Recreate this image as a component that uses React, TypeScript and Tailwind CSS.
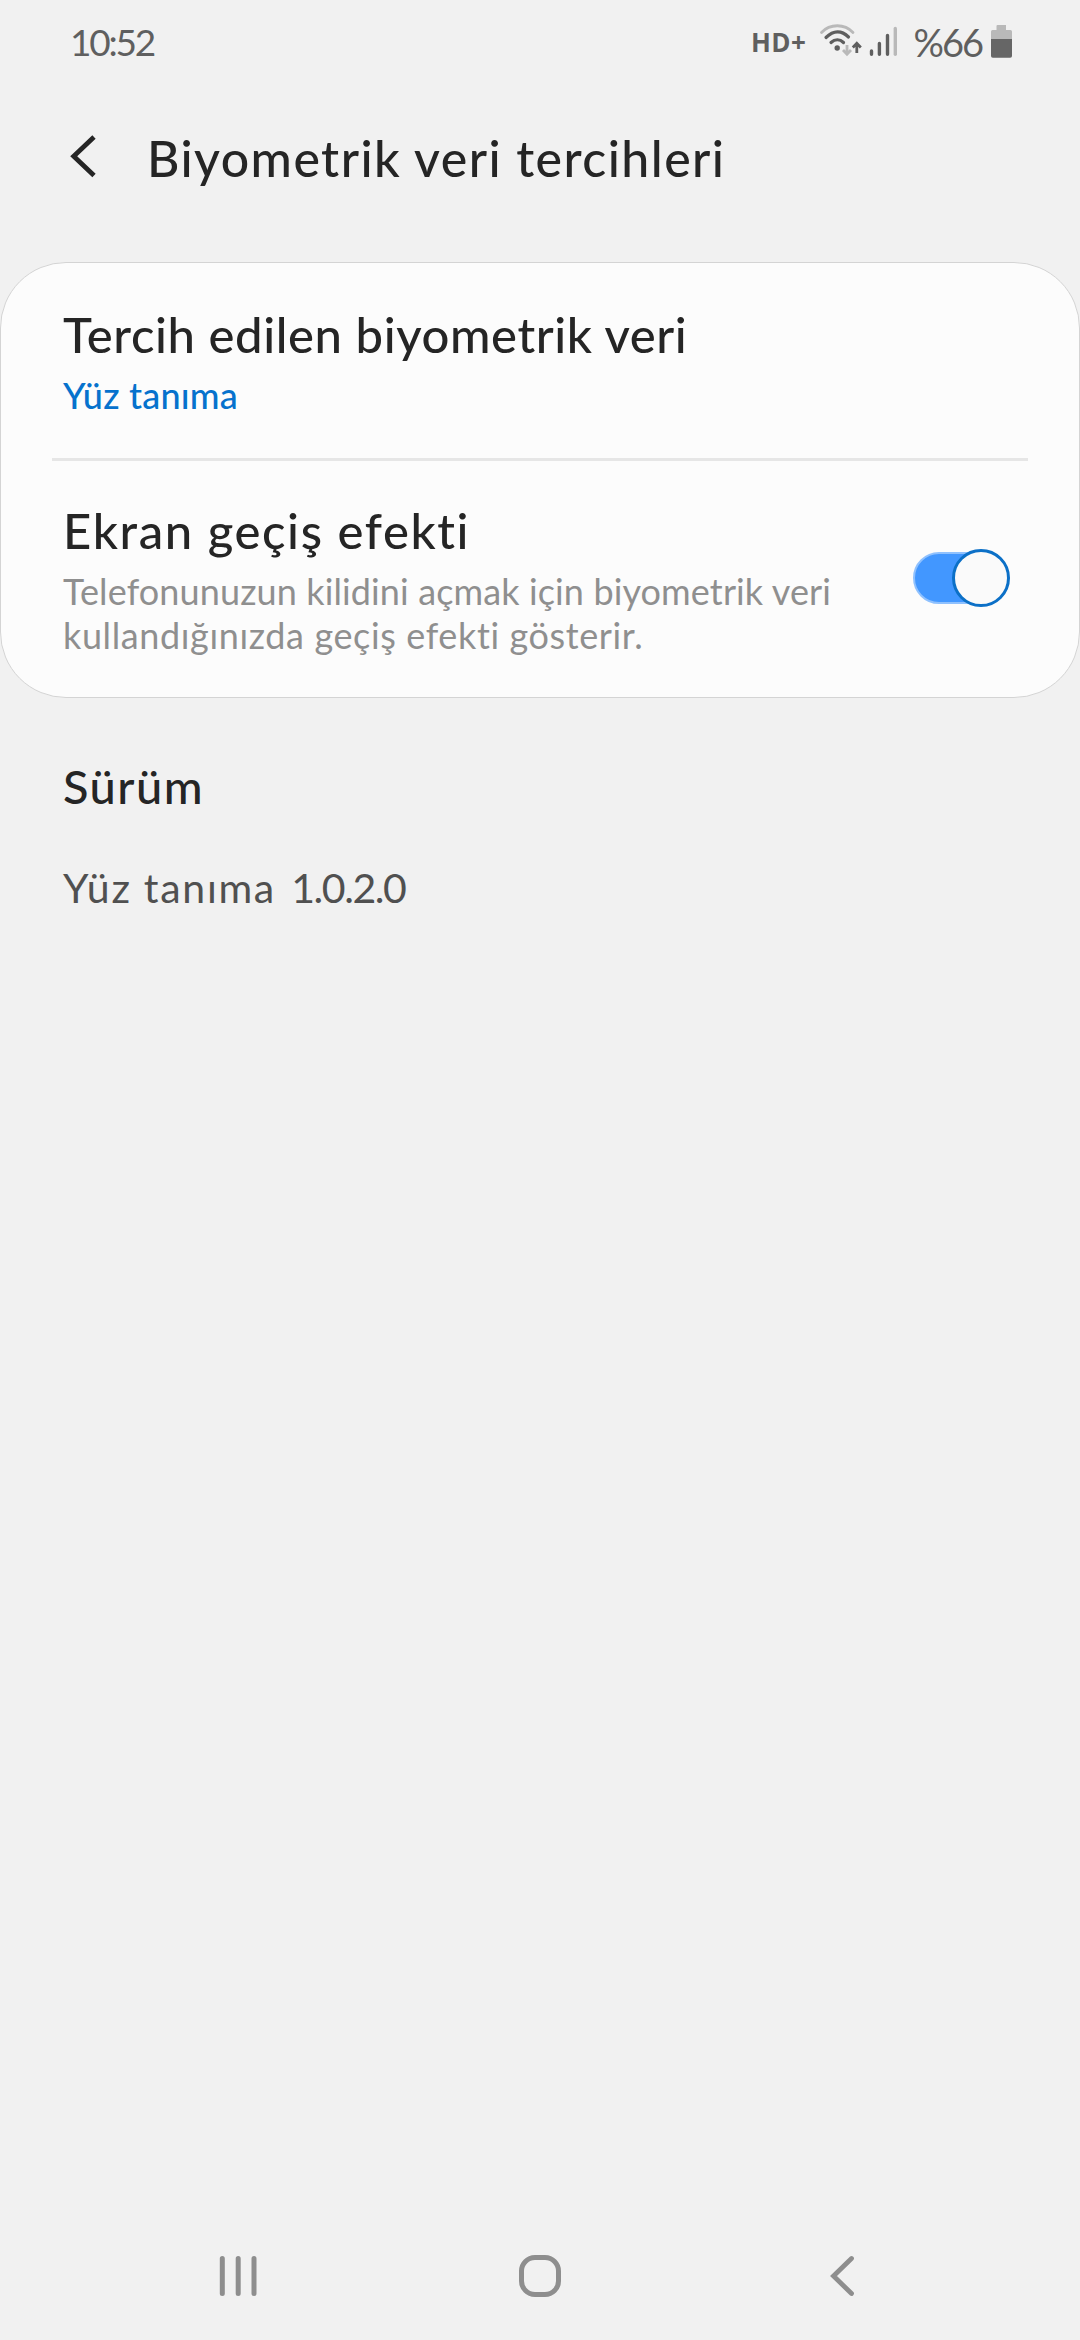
import type { ReactNode } from "react";

const WifiIcon = () => (
    <svg width="44" height="36" viewBox="818 22 44 36" fill="none" strokeLinecap="round">
        <path d="M821.5 32.5C830 23.5 844.5 23.5 853 32.5" stroke="#b9b9b9" strokeWidth="2.8" />
        <path d="M826 37.5C833.5 30.2 841.5 30.2 848.5 37" stroke="#5f5f5f" strokeWidth="3.2" />
        <path d="M831 42.5C835 38.8 839.8 38.8 843.5 42.5" stroke="#5f5f5f" strokeWidth="3.2" />
        <circle cx="837.2" cy="48" r="2.7" fill="#5f5f5f" />
        <path d="M847 45V54M843 50L847 54.2L851 50" stroke="#b9b9b9" strokeWidth="2.8" strokeLinecap="butt" />
        <path d="M856.8 53V44M852.8 47.5L856.8 43.3L860.8 47.5" stroke="#5f5f5f" strokeWidth="2.8" strokeLinecap="butt" />
    </svg>
);

const SignalIcon = () => (
    <svg width="28" height="36" viewBox="869 22 28 36" strokeLinecap="round" strokeWidth="3.4" stroke="#5f5f5f">
        <path d="M871.5 51V54.2M879.4 43.5V54.2M887.5 35.5V54.2" />
        <path d="M895.3 28.5V54.2" stroke="#b9b9b9" />
    </svg>
);

const BatteryIcon = () => (
    <svg width="22" height="34" viewBox="991 25 22 34">
        <path d="M997.5 25H1006V30H1010.5Q1012 30 1012 31.5V39H991V31.5Q991 30 992.5 30H996.5V26Q996.5 25 997.5 25Z" fill="#b9b9b9" />
        <path d="M991 39H1012V56Q1012 57.8 1010.2 57.8H992.8Q991 57.8 991 56Z" fill="#666666" />
    </svg>
);

const StatusBar = () => (
    <div className="flex h-[84px] items-start justify-between pl-[70px] pr-[67px] text-[#5f5f5f]">
        <span className="mt-[19px] text-[37px] leading-[46px] tracking-[-2.2px]">10:52</span>
        <div className="flex items-start">
            <span className="mr-[12px] mt-[26px] font-['Open_Sans'] text-[26px] font-bold leading-[32px] tracking-[0.5px]">HD+</span>
            <div className="mr-[7px] mt-[22px]"><WifiIcon /></div>
            <div className="mr-[16px] mt-[22px]"><SignalIcon /></div>
            <span className="mr-[9px] mt-[19px] text-[38px] leading-[46px] tracking-[-2px]">%66</span>
            <div className="mt-[25px]"><BatteryIcon /></div>
        </div>
    </div>
);

const Title = ({ children, className }: { children: ReactNode; className: string }) => (
    <h2 className={`text-[49px] font-medium leading-[60px] text-[#252525] ${className}`}>{children}</h2>
);

const Switch = () => (
    <button role="switch" aria-checked="true" className="relative mt-[49px] h-[58px] w-[97px]">
        <span className="absolute left-0 top-[3px] h-[52px] w-[92px] rounded-full border-2 border-[#8fc1fe] bg-[#4297ff]" />
        <span className="absolute right-0 top-0 size-[58px] rounded-full border-[3px] border-[#0c70c7] bg-[#fafafa]" />
    </button>
);

const NavBar = () => (
    <nav className="flex h-[128px] items-center justify-between px-[216px]">
        <svg width="44" height="44" viewBox="216 2254 44 44" stroke="#8e8e8e" strokeWidth="5" strokeLinecap="round">
            <path d="M222.3 2258.5V2293.5M238.2 2258.5V2293.5M254 2258.5V2293.5" />
        </svg>
        <svg width="44" height="44" viewBox="518 2254 44 44" fill="none" stroke="#8e8e8e" strokeWidth="5">
            <rect x="521.5" y="2257.5" width="37" height="37" rx="13.5" />
        </svg>
        <svg width="44" height="44" viewBox="820 2254 44 44" fill="none" stroke="#8e8e8e" strokeWidth="4.8" strokeLinecap="round">
            <path d="M851.5 2258.5L833.5 2276L851.5 2293.5" />
        </svg>
    </nav>
);

const App = () => {
    return (
        <div className="flex h-[2340px] w-[1080px] flex-col bg-[#f1f1f1] font-[Lato,sans-serif]">
            <StatusBar />
            <header className="flex h-[178px] items-start pl-[70px]">
                <svg className="mt-[51px]" width="26" height="44" viewBox="70 135 26 44" fill="none" stroke="#252525" strokeWidth="4.8">
                    <path d="M94 137L73.7 156.3L94 175.6" />
                </svg>
                <h1 className="ml-[51px] mt-[44px] text-[50px] font-medium leading-[60px] tracking-[1.45px] text-[#252525]">Biyometrik veri tercihleri</h1>
            </header>
            <main className="grow">
                <section className="h-[436px] rounded-[66px] border border-[#d4d4d4] bg-[#fcfcfc]">
                    <div className="px-[62px] pb-[41px] pt-[41px]">
                        <Title className="tracking-[0.6px]">Tercih edilen biyometrik veri</Title>
                        <p className="mt-[9px] text-[36px] font-medium leading-[44px] tracking-[0.2px] text-[#0672cd]">Yüz tanıma</p>
                    </div>
                    <div className="mx-[51px] h-[3px] bg-[#e6e6e6]" />
                    <div className="flex items-start justify-between pl-[62px] pr-[69px] pt-[39px]">
                        <div>
                            <Title className="tracking-[1.6px]">Ekran geçiş efekti</Title>
                            <p className="mt-[9px] whitespace-nowrap text-[36px] leading-[44px] text-[#8f8f8f]">
                                <span className="tracking-[0.12px]">Telefonunuzun kilidini açmak için biyometrik veri</span>
                                <br />
                                <span className="tracking-[0.62px]">kullandığınızda geçiş efekti gösterir.</span>
                            </p>
                        </div>
                        <Switch />
                    </div>
                </section>
                <section className="px-[63px] pt-[58px]">
                    <h2 className="text-[47px] font-medium leading-[60px] tracking-[1.5px] text-[#252525]">Sürüm</h2>
                    <p className="mt-[46px] text-[41px] leading-[52px] text-[#505050]">
                        <span className="tracking-[1.7px]">Yüz tanıma </span>
                        <span className="ml-[3px] tracking-[-1.4px]">1.0.2.0</span>
                    </p>
                </section>
            </main>
            <NavBar />
        </div>
    );
};

export default App;
